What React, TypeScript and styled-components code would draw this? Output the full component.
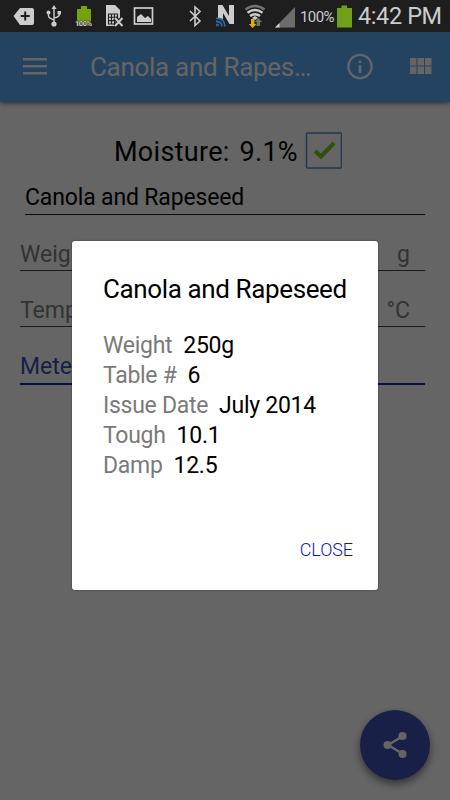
import React from "react";
import styled, { createGlobalStyle } from "styled-components";

const GlobalStyle = createGlobalStyle`
  * { box-sizing: border-box; }
  body { margin: 0; background: #fff; font-family: Roboto, "Noto Sans", sans-serif; }
`;

const Screen = styled.div`
  position: relative;
  width: 450px;
  height: 800px;
  overflow: hidden;
  display: flex;
  flex-direction: column;
  background: #fff;
`;

const StatusBar = styled.header`
  position: relative;
  z-index: 3;
  flex: none;
  display: flex;
  height: 32px;
  background: #1e1e1e;
`;

const StatusIcons = styled.svg`
  flex: none;
  width: 300px;
  height: 32px;
`;

const StatusText = styled.span<{ $size: number; $top: number; $width: number; $spacing: number }>`
  flex: none;
  width: ${(p) => p.$width}px;
  padding-top: ${(p) => p.$top}px;
  font-size: ${(p) => p.$size}px;
  line-height: 20px;
  letter-spacing: ${(p) => p.$spacing}px;
  white-space: nowrap;
  color: #ccc;
`;

const BatteryIcon = styled.svg`
  flex: none;
  width: 22px;
  height: 32px;
`;

const Toolbar = styled.nav`
  flex: none;
  display: flex;
  align-items: center;
  height: 70px;
  padding: 0 18px 2px 23px;
  color: #fff;
  background: #5aaaf2;
  box-shadow: 0 1px 5px rgba(0, 0, 0, 0.6);
`;

const ToolbarIcon = styled.svg`
  flex: none;
  display: block;
`;

const ToolbarTitle = styled.h1`
  flex: none;
  width: 256px;
  margin: 2px 0 0 43px;
  font-size: 26px;
  font-weight: 400;
  line-height: 36px;
  letter-spacing: -0.3px;
  white-space: nowrap;
`;

const Form = styled.main`
  flex: 1;
  padding: 29px 25px 0 20px;
`;

const Result = styled.div`
  display: flex;
  align-items: center;
  height: 38px;
  padding-left: 94px;
  font-size: 27px;
  white-space: nowrap;
`;

const ResultText = styled.span<{ $width: number }>`
  flex: none;
  width: ${(p) => p.$width}px;
  padding-top: 3px;
  letter-spacing: 0.3px;
`;

const Checkbox = styled.svg`
  flex: none;
  width: 37px;
  height: 37px;
`;

const Product = styled.div`
  height: 46px;
  margin-left: 5px;
  padding-top: 14px;
  border-bottom: 1px solid #222;
  font-size: 23px;
  line-height: 30px;
  letter-spacing: -0.15px;
  white-space: nowrap;
`;

const Field = styled.div<{ $active?: boolean }>`
  display: flex;
  justify-content: space-between;
  height: ${(p) => (p.$active ? 58 : 56)}px;
  padding: 25px 15px 0 0;
  border-bottom: ${(p) => (p.$active ? "2px solid #0c2aa8" : "1px solid #444")};
  color: ${(p) => (p.$active ? "#3b4fb4" : "#808080")};
  font-size: 23px;
  line-height: 30px;
  white-space: nowrap;
`;

const ShareButton = styled.button`
  position: absolute;
  left: 360px;
  top: 710px;
  display: grid;
  place-items: center;
  width: 70px;
  height: 70px;
  padding: 0;
  border: 0;
  border-radius: 50%;
  background: #3f51b5;
  box-shadow: 0 4px 9px rgba(0, 0, 0, 0.5);
`;

const Scrim = styled.div`
  position: absolute;
  inset: 32px 0 0;
  z-index: 1;
  background: rgba(0, 0, 0, 0.605);
`;

const Dialog = styled.section`
  position: absolute;
  left: 72px;
  top: 241px;
  z-index: 2;
  display: flex;
  flex-direction: column;
  width: 306px;
  height: 349px;
  padding: 30px 25px 24px 31px;
  border-radius: 3px;
  background: #fff;
  box-shadow: 0 0 2px rgba(0, 0, 0, 0.5);
`;

const DialogTitle = styled.h2`
  margin: 0 0 24px;
  font-size: 26px;
  font-weight: 400;
  line-height: 36px;
  letter-spacing: -0.38px;
  white-space: nowrap;
`;

const Details = styled.dl`
  margin: 0;
`;

const Detail = styled.div`
  display: flex;
  gap: 11px;
  height: 30px;
  font-size: 23px;
  line-height: 30px;
  letter-spacing: -0.28px;
  white-space: nowrap;
`;

const Term = styled.dt`
  color: #7a7a7a;
`;

const Value = styled.dd`
  margin: 0;
  color: #000;
`;

const CloseButton = styled.button`
  align-self: flex-end;
  margin-top: auto;
  padding: 0;
  border: 0;
  background: none;
  color: #0b16b4;
  font: 300 18px/32px Roboto, sans-serif;
  letter-spacing: -0.1px;
`;

const details = [
  ["Weight", "250g"],
  ["Table #", "6"],
  ["Issue Date", "July 2014"],
  ["Tough", "10.1"],
  ["Damp", "12.5"],
];

function SystemStatus() {
  return (
    <StatusBar>
      <StatusIcons viewBox="0 0 300 32" fill="#ccc">
        <path d="M13.5 16 20 8h12q2 0 2 2v13q0 2-2 2H20Z" />
        <path d="M25.2 11.5v9M20.7 16h9" stroke="#1e1e1e" strokeWidth="2" />
        <g stroke="#ccc" strokeWidth="1.4" fill="none">
          <path d="M54 8v16M48.5 12v4q0 2 5.5 4M59.5 12v2q0 3-5.5 4" />
        </g>
        <path d="m54 5 2.6 4h-5.2ZM57.5 11h3.5v3.5h-3.5Z" />
        <circle cx="48.5" cy="12.5" r="2" />
        <circle cx="54" cy="24" r="2.6" />
        <path d="M77 9h4V6h6v3h4v17H77Z" fill="#76a30b" />
        <text x="75" y="26" fontFamily="Roboto" fontSize="7.5" fontWeight="700" textLength="17" stroke="#1e1e1e" strokeWidth="0.8" paintOrder="stroke">100%</text>
        <path d="M106 5h9l5 5v13l-3 3h-11Z" />
        <path d="M108.5 14h9v10h-9ZM111.5 14v10M114.5 14v10M108.5 17.3h9M108.5 20.6h9" fill="none" stroke="#1e1e1e" strokeWidth="1.1" />
        <path d="m115 18 7.5 8m0-8-7.5 8" stroke="#1e1e1e" strokeWidth="4.5" />
        <path d="m115 18 7.5 8m0-8-7.5 8" stroke="#ccc" strokeWidth="2" />
        <rect x="134.5" y="8" width="18" height="16" fill="none" stroke="#ccc" strokeWidth="1.7" />
        <path d="M137 22v-5l4-3 4 4 3-2 3 3v3Z" />
        <path d="m190 11 10 10-5 4.500V7l5 4.500-10 9.500" fill="none" stroke="#ccc" strokeWidth="1.6" />
        <path d="M218 18V5h4.500l6.500 11V5h5v19h-4.500L223 13v6Z" />
        <g fill="none" stroke="#2d66a8" strokeWidth="1.8">
          <path d="M216 18.400q8.500-.4 9 8M216 21.500q5.500-.3 6 5" />
        </g>
        <circle cx="217.500" cy="25" r="1.6" fill="#2d66a8" />
        <g fill="none" strokeWidth="2.500">
          <path d="M245.500 9.500q9.500-7 19 0" stroke="#737373" />
          <path d="M247.500 12.800q7.500-5.500 15 0" stroke="#ccc" />
          <path d="M250 16q5-3.500 10 0" stroke="#ccc" />
        </g>
        <path d="m252 18 3-2 3 2-3 2Z" />
        <path d="M251 19h3.400v5h2.200l-3.900 4-3.900-4h2.200Z" fill="#e5ac10" />
        <path d="M256.700 26v-4h-2l3.700-4 3.700 4h-2v4Z" fill="#737373" />
        <path d="M275 27.500 295 7v20.500Z" fill="#6c6c6c" />
        <path d="m275 27.500 4.500-4.600v4.600Z" />
      </StatusIcons>
      <StatusText $size={15} $top={7} $width={36} $spacing={-0.6}>100%</StatusText>
      <BatteryIcon viewBox="336 0 22 32"><path d="M337 8h4.500V5.500h5.500V8h5v19.500H337Z" fill="#70a019" /></BatteryIcon>
      <StatusText $size={23.500} $top={6} $width={90} $spacing={-0.4}>4:42 PM</StatusText>
    </StatusBar>
  );
}

export default function App() {
  return (
    <>
      <GlobalStyle />
      <Screen>
        <SystemStatus />
        <Toolbar>
          <ToolbarIcon width="24" height="18" viewBox="0 0 24 18" fill="#fff">
            <path d="M0 1h24v2.500H0ZM0 8h24v2.500H0ZM0 15h24v2.500H0Z" />
          </ToolbarIcon>
          <ToolbarTitle>Canola and Rapes…</ToolbarTitle>
          <ToolbarIcon width="27" height="27" viewBox="0 0 27 27" fill="none" stroke="#fff" strokeWidth="2.200">
            <circle cx="14" cy="13.500" r="11.600" />
            <path d="M14 12v8M14 7.500v2.500" strokeWidth="2.800" />
          </ToolbarIcon>
          <ToolbarIcon width="59" height="18" viewBox="0 0 59 18" fill="#fff">
            <path d="M37 1h6.500v7.500H37ZM44.500 1H51v7.500h-6.500ZM52 1h6.500v7.500H52ZM37 9.500h6.500V17H37ZM44.500 9.500H51V17h-6.500ZM52 9.500h6.500V17H52Z" />
          </ToolbarIcon>
        </Toolbar>
        <Form>
          <Result>
            <ResultText $width={125.500}>Moisture:</ResultText>
            <ResultText $width={65}>9.1%</ResultText>
            <Checkbox viewBox="0 0 37 37" fill="none">
              <rect x="1.500" y="1" width="35" height="35" rx="1" stroke="#588fc5" strokeWidth="1.600" />
              <path d="m10 19 6 5.500L29 11" stroke="#7bc91d" strokeWidth="4.200" />
            </Checkbox>
          </Result>
          <Product>Canola and Rapeseed</Product>
          <Field><span>Weight</span><span>g</span></Field>
          <Field><span>Temp</span><span>°C</span></Field>
          <Field $active><span>Meter</span></Field>
        </Form>
        <ShareButton aria-label="Share">
          <svg width="26" height="28" viewBox="0 0 26 28" fill="#fff">
            <path d="M21 5 6 14l15 9" fill="none" stroke="#fff" strokeWidth="2.500" />
            <circle cx="20.500" cy="5" r="4" /><circle cx="5.500" cy="14" r="4" /><circle cx="20.500" cy="23" r="4" />
          </svg>
        </ShareButton>
        <Scrim />
        <Dialog role="dialog">
          <DialogTitle>Canola and Rapeseed</DialogTitle>
          <Details>
            {details.map(([term, value]) => (
              <Detail key={term}><Term>{term}</Term><Value>{value}</Value></Detail>
            ))}
          </Details>
          <CloseButton>CLOSE</CloseButton>
        </Dialog>
      </Screen>
    </>
  );
}
